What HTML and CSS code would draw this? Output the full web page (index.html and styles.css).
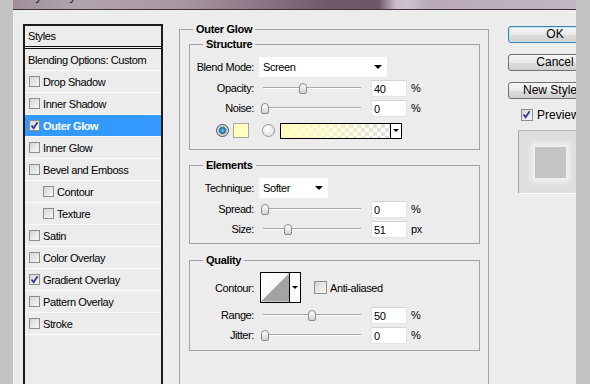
FILE: index.html
```html
<!DOCTYPE html>
<html lang="en">
<head>
  <meta charset="UTF-8" />
  <title>Layer Style</title>
  <link rel="stylesheet" href="styles.css">
</head>
<body>
  <div class="screen">
    <div class="edge"></div>
    <div class="window">
      <div class="titlebar"><span class="title">Layer Style</span></div>
      <div class="dialog">

        <div class="styles-list">
          <div class="list-head">Styles</div>
          <div class="list-row">Blending Options: Custom</div>
          <div class="list-row"><span class="cb"></span>Drop Shadow</div>
          <div class="list-row"><span class="cb"></span>Inner Shadow</div>
          <div class="list-row active"><span class="cb checked"><svg viewBox="0 0 9 9"><path d="M1.5 4.5 L3.6 7.2 L7.6 1.2" /></svg></span>Outer Glow</div>
          <div class="list-row"><span class="cb"></span>Inner Glow</div>
          <div class="list-row"><span class="cb"></span>Bevel and Emboss</div>
          <div class="list-row sub"><span class="cb"></span>Contour</div>
          <div class="list-row sub"><span class="cb"></span>Texture</div>
          <div class="list-row"><span class="cb"></span>Satin</div>
          <div class="list-row"><span class="cb"></span>Color Overlay</div>
          <div class="list-row"><span class="cb checked"><svg viewBox="0 0 9 9"><path d="M1.5 4.5 L3.6 7.2 L7.6 1.2" /></svg></span>Gradient Overlay</div>
          <div class="list-row"><span class="cb"></span>Pattern Overlay</div>
          <div class="list-row"><span class="cb"></span>Stroke</div>
          <div class="list-rest"></div>
        </div>

        <fieldset class="group outer">
          <legend>Outer Glow</legend>

          <fieldset class="group structure">
            <legend>Structure</legend>
            <div class="row sel-row">
              <label>Blend Mode:</label>
              <div class="select blend">Screen<span class="arrow"></span></div>
            </div>
            <div class="row">
              <label>Opacity:</label>
              <div class="slider"><span class="thumb" style="left: 40px"></span></div>
              <div class="num">40</div><span class="unit">%</span>
            </div>
            <div class="row">
              <label>Noise:</label>
              <div class="slider"><span class="thumb" style="left: 2px"></span></div>
              <div class="num">0</div><span class="unit">%</span>
            </div>
            <div class="row color-row">
              <span class="radio on"></span>
              <span class="swatch"></span>
              <span class="radio"></span>
              <span class="gradient"><span class="fill"></span><span class="drop"><span class="arrow small"></span></span></span>
            </div>
          </fieldset>

          <fieldset class="group elements">
            <legend>Elements</legend>
            <div class="row sel-row">
              <label>Technique:</label>
              <div class="select technique">Softer<span class="arrow"></span></div>
            </div>
            <div class="row">
              <label>Spread:</label>
              <div class="slider"><span class="thumb" style="left: 2px"></span></div>
              <div class="num">0</div><span class="unit">%</span>
            </div>
            <div class="row">
              <label>Size:</label>
              <div class="slider"><span class="thumb" style="left: 25px"></span></div>
              <div class="num">51</div><span class="unit">px</span>
            </div>
          </fieldset>

          <fieldset class="group quality">
            <legend>Quality</legend>
            <div class="row contour-row">
              <label>Contour:</label>
              <div class="contour">
                <svg class="curve" viewBox="0 0 29 29"><path d="M0 29 L29 0 L29 29 Z" /></svg>
                <span class="drop"><span class="arrow small"></span></span>
              </div>
              <span class="cb anti"></span><span class="anti-text">Anti-aliased</span>
            </div>
            <div class="row">
              <label>Range:</label>
              <div class="slider"><span class="thumb" style="left: 49px"></span></div>
              <div class="num">50</div><span class="unit">%</span>
            </div>
            <div class="row">
              <label>Jitter:</label>
              <div class="slider"><span class="thumb" style="left: 2px"></span></div>
              <div class="num">0</div><span class="unit">%</span>
            </div>
          </fieldset>
        </fieldset>

        <div class="side">
          <div class="btn default">OK</div>
          <div class="btn">Cancel</div>
          <div class="btn">New Style...</div>
          <div class="preview-check"><span class="cb checked"><svg viewBox="0 0 9 9"><path d="M1.5 4.5 L3.6 7.2 L7.6 1.2" /></svg></span>Preview</div>
          <div class="preview"><div class="preview-square"></div></div>
        </div>

      </div>
    </div>
    <div class="edge"></div>
  </div>
</body>
</html>
```

FILE: styles.css
```css
body {
  margin: 0;
  font-family: "Liberation Sans", Arial, sans-serif;
  font-size: 11px;
  letter-spacing: -0.4px;
  color: #000;
}
.screen {
  display: flex;
  width: 590px;
  height: 384px;
  overflow: hidden;
  background: #c2c2c2;
}
.edge {
  width: 13px;
  flex: none;
  background: #c2c2c2;
}
.edge:last-child {
  width: 14px;
}
.window {
  flex: 1;
  min-width: 0;
  display: flex;
  flex-direction: column;
  overflow: hidden;
}
.titlebar {
  height: 9px;
  flex: none;
  overflow: hidden;
  border-bottom: 1px solid #3a3438;
  background: linear-gradient(90deg, #9e8f9a 0%, #b2a4ae 12%, #a897a3 30%, #8c7584 44%, #6f5969 56%, #6d5868 65%, #cbbccb 68%, #d0c2d0 70%, #b8a8b8 74%, #c3b5c3 100%);
}
.title {
  display: block;
  margin: -12px 0 0 8px;
  font-size: 13px;
  line-height: 16px;
  letter-spacing: 0;
  color: #2a2228;
}
.dialog {
  flex: 1;
  display: flex;
  align-items: flex-start;
  padding-left: 10px;
  background: #ececec;
  overflow: hidden;
}

/* styles list */
.styles-list {
  flex: none;
  width: 136px;
  height: 400px;
  margin-top: 14px;
  border: 2px solid #1c1c1c;
  border-bottom: none;
  background: #ececec;
}
.list-head {
  height: 20px;
  line-height: 20px;
  padding-left: 3px;
  border-bottom: 3px double #111;
}
.list-row {
  display: flex;
  align-items: center;
  height: 21px;
  padding-left: 3px;
  border-bottom: 1px solid #fbfbfb;
}
.list-row .cb {
  margin: 0 3px 0 1px;
}
.list-row.sub {
  padding-left: 17px;
}
.list-row.active {
  background: #3399ff;
  color: #fff;
  font-weight: bold;
}

/* checkbox + radio */
.cb {
  display: inline-block;
  flex: none;
  width: 11px;
  height: 11px;
  box-sizing: border-box;
  border: 1px solid #8c8c8c;
  background: linear-gradient(135deg, #d6d6d6, #f7f7f7);
  position: relative;
}
.cb svg {
  position: absolute;
  left: 0;
  top: 0;
  width: 9px;
  height: 9px;
}
.cb path {
  fill: none;
  stroke: #2d3a8c;
  stroke-width: 1.8;
}
.radio {
  display: inline-block;
  flex: none;
  width: 13px;
  height: 13px;
  box-sizing: border-box;
  border-radius: 50%;
  border: 1px solid #9a9a9a;
  background: radial-gradient(circle at 40% 35%, #ffffff, #d8d8d8);
}
.radio.on {
  border-color: #4f4f4f;
  background: radial-gradient(circle, #6fc8f0 0, #1c6ea8 3px, #bfbfbf 4px, #f4f4f4 6px);
}

/* group boxes */
.group {
  margin: 0;
  border: 1px solid #a2a2a2;
  min-width: 0;
}
.group legend {
  padding: 0 3px;
  font-weight: bold;
  line-height: 14px;
  letter-spacing: -0.3px;
}
.outer {
  flex: none;
  width: 291px;
  height: 400px;
  margin: 12px 0 0 16px;
  padding: 1px 8px 0 9px;
  border-bottom: none;
}
.outer > legend {
  margin-left: 4px;
}
.structure,
.elements,
.quality {
  padding: 6px 0 10px 0;
}
.structure > legend,
.elements > legend,
.quality > legend {
  margin-left: 13px;
}
.elements {
  margin-top: 8px;
  padding-bottom: 4px;
}
.quality {
  margin-top: 9px;
  padding-top: 5px;
  padding-bottom: 5px;
}

/* rows */
.row {
  display: flex;
  align-items: center;
  height: 20px;
}
.row label {
  width: 64px;
  margin-right: 5px;
  text-align: right;
  flex: none;
}
.sel-row {
  margin-bottom: 1px;
}
.select {
  height: 20px;
  box-sizing: border-box;
  display: flex;
  align-items: center;
  justify-content: space-between;
  padding: 0 5px 0 4px;
  background: #fff;
}
.select.blend {
  width: 128px;
}
.select.technique {
  width: 69px;
}
.arrow {
  width: 0;
  height: 0;
  border-left: 4px solid transparent;
  border-right: 4px solid transparent;
  border-top: 4px solid #000;
}
.arrow.small {
  border-left-width: 3px;
  border-right-width: 3px;
  border-top-width: 3px;
}
.slider {
  position: relative;
  width: 106px;
  height: 20px;
  flex: none;
}
.slider::before {
  content: "";
  position: absolute;
  left: 4px;
  right: 4px;
  top: 9px;
  height: 1px;
  background: #a9a9a9;
  border-bottom: 1px solid #fcfcfc;
}
.thumb {
  position: absolute;
  top: 5px;
  width: 8px;
  height: 11px;
  box-sizing: border-box;
  border: 1px solid #8a8a8a;
  border-radius: 4px 4px 2px 2px;
  background: linear-gradient(#ffffff, #d2d2d2);
}
.num {
  width: 36px;
  height: 17px;
  box-sizing: border-box;
  margin-left: 6px;
  padding-left: 2px;
  line-height: 16px;
  background: #fff;
  border: 1px solid #e3e3e3;
  border-top-color: #d4d4d4;
}
.unit {
  margin-left: 4px;
}

.color-row {
  height: 17px;
  margin-top: 4px;
  padding-left: 26px;
}
.swatch {
  width: 16px;
  height: 15px;
  box-sizing: border-box;
  margin-left: 4px;
  border: 1px solid #a8a8a8;
  background: #ffffc0;
}
.swatch + .radio {
  margin-left: 13px;
}
.gradient {
  display: flex;
  width: 122px;
  height: 16px;
  box-sizing: border-box;
  margin-left: 5px;
  border: 1px solid #000;
}
.gradient .fill {
  flex: 1;
  background:
    linear-gradient(90deg, #ffffc0 0%, rgba(255, 255, 192, 0.6) 45%, rgba(255, 255, 192, 0) 100%),
    conic-gradient(#dedede 25%, #fff 0 50%, #dedede 0 75%, #fff 0) 0 0 / 8px 8px;
}
.drop {
  width: 10px;
  flex: none;
  display: flex;
  align-items: center;
  justify-content: center;
  border-left: 1px solid #000;
  background: #fff;
}

.contour-row {
  height: 31px;
  margin-bottom: 2px;
}
.contour {
  display: flex;
  width: 41px;
  height: 31px;
  box-sizing: border-box;
  margin-left: 1px;
  border: 1px solid #000;
  background: #fff;
}
.contour .curve {
  width: 29px;
  height: 29px;
  background: linear-gradient(135deg, #ffffff, #f0f0f0);
}
.contour .curve path {
  fill: #a3a3a3;
}
.cb.anti {
  width: 13px;
  height: 13px;
  margin-left: 13px;
}
.anti-text {
  margin-left: 3px;
}

/* right column */
.side {
  flex: none;
  width: 94px;
  margin: 16px 0 0 19px;
  font-size: 12px;
  letter-spacing: 0;
}
.btn {
  height: 17px;
  box-sizing: border-box;
  margin-bottom: 11px;
  border: 1px solid #707070;
  border-radius: 3px;
  background: linear-gradient(#f6f6f6, #e9e9e9 50%, #dcdcdc 51%, #d0d0d0);
  text-align: center;
  line-height: 15px;
  white-space: nowrap;
  overflow: hidden;
}
.btn.default {
  border-color: #3c7fb1;
  box-shadow: inset 0 0 0 1px #c4e4f5;
}
.preview-check {
  display: flex;
  align-items: center;
  height: 13px;
  margin-top: -2px;
  padding-left: 13px;
}
.preview-check .cb {
  width: 12px;
  height: 12px;
  margin-right: 4px;
}
.preview {
  width: 70px;
  height: 64px;
  box-sizing: border-box;
  margin: 9px 0 0 10px;
  padding: 16px 0 0 16px;
  border-left: 1px solid #a8a8a8;
  border-top: 1px solid #bdbdbd;
  border-bottom: 1px solid #fafafa;
  background: #dedede;
}
.preview-square {
  width: 31px;
  height: 31px;
  background: #c4c4c4;
  box-shadow: 0 0 6px 4px #f2f2f2;
}
```
